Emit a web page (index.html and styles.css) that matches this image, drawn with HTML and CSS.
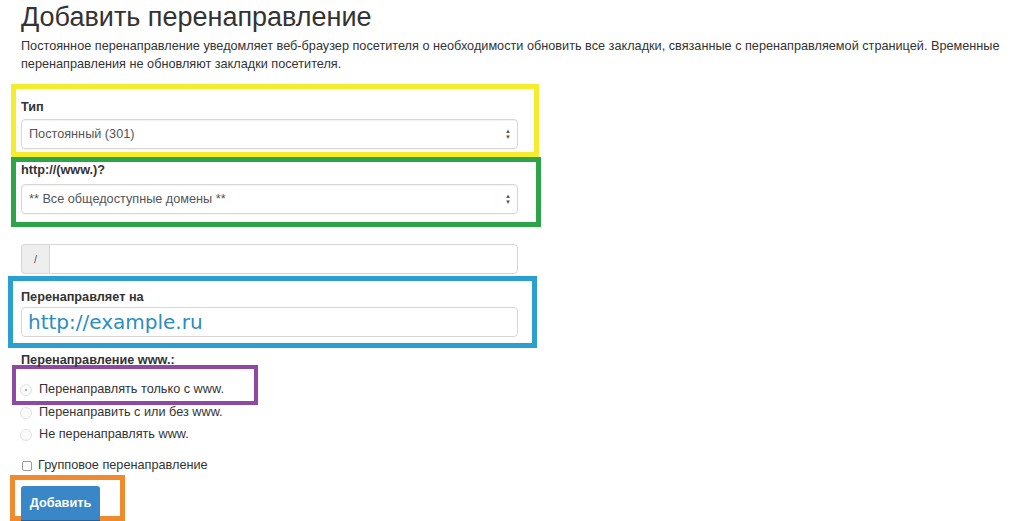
FILE: index.html
```html
<!DOCTYPE html>
<html lang="ru">
<head>
<meta charset="utf-8">
<link rel="stylesheet" href="styles.css">
</head>
<body>
<div class="page">
  <h1 class="title">Добавить перенаправление</h1>
  <p class="intro">Постоянное перенаправление уведомляет веб-браузер посетителя о необходимости обновить все закладки, связанные с перенаправляемой страницей. Временные перенаправления не обновляют закладки посетителя.</p>

  <div class="mark mark-yellow">
    <label class="lbl">Тип</label>
    <div class="select"><span>Постоянный (301)</span><span class="arrows">&#9650;<br>&#9660;</span></div>
  </div>

  <div class="mark mark-green">
    <label class="lbl">http://(www.)?</label>
    <div class="select"><span>** Все общедоступные домены **</span><span class="arrows">&#9650;<br>&#9660;</span></div>
  </div>

  <div class="input-group">
    <span class="addon">/</span>
    <span class="input-field"></span>
  </div>

  <div class="mark mark-blue">
    <label class="lbl">Перенаправляет на</label>
    <div class="text-input"><span class="big-url">http://example.ru</span></div>
  </div>

  <label class="lbl lbl-www">Перенаправление www.:</label>
  <div class="mark mark-purple">
    <div class="radio-row"><span class="radio checked"></span>Перенаправлять только с www.</div>
  </div>
  <div class="radio-row radio-second"><span class="radio"></span>Перенаправить с или без www.</div>
  <div class="radio-row radio-last"><span class="radio"></span>Не перенаправлять www.</div>

  <div class="check-row"><span class="checkbox"></span>Групповое перенаправление</div>

  <div class="mark mark-orange">
    <button class="btn">Добавить</button>
  </div>
</div>
</body>
</html>
```

FILE: styles.css
```css
html, body {
  margin: 0;
  padding: 0;
  background: #fff;
  overflow: hidden;
}
body {
  font-family: "Liberation Sans", Arial, sans-serif;
  color: #333;
  font-size: 12.7px;
}
.page {
  padding-left: 21px;
  width: 1000px;
}
.title {
  font-size: 27px;
  font-weight: normal;
  margin: 0;
  padding-top: 1px;
  line-height: 32px;
  color: #333;
}
.intro {
  margin: 4px 0 0 0;
  line-height: 18px;
  font-size: 12.7px;
  color: #333;
  width: 995px;
}
.mark {
  box-sizing: border-box;
  margin-left: -10px;
  padding-left: 5px;
  border: 5px solid transparent;
}
.mark-yellow {
  margin-top: 11px;
  width: 528px;
  border-color: #f4ec2c;
  padding-top: 10px;
  padding-bottom: 3px;
}
.mark-yellow .lbl {
  margin-bottom: 3px;
}
.mark-green {
  width: 530px;
  border-color: #2ea44a;
  padding-top: 0;
  padding-bottom: 8px;
}
.mark-blue {
  margin-left: -13px;
  padding-left: 8px;
  width: 529px;
  border-color: #2a9fd0;
  padding-top: 8px;
  padding-bottom: 6px;
  margin-top: 2px;
}
.mark-blue .lbl {
  margin-bottom: 1px;
}
.mark-purple {
  width: 246px;
  border-width: 4px;
  border-color: #8e4aa2;
  margin-left: -9px;
  padding-left: 5px;
  padding-top: 12px;
  padding-bottom: 3px;
  margin-top: -4px;
}
.mark-orange {
  width: 115px;
  border-width: 5px;
  border-color: #ef8a2e;
  margin-left: -11px;
  padding-left: 6px;
  padding-top: 6px;
  margin-top: 1px;
  height: 46px;
}
.lbl {
  display: block;
  font-weight: bold;
  font-size: 12.7px;
  line-height: 17px;
  margin-bottom: 5px;
  color: #333;
}
.select {
  box-sizing: border-box;
  width: 497px;
  height: 30px;
  border: 1px solid #d6d6d6;
  border-radius: 4px;
  box-shadow: inset 0 1px 1px rgba(0,0,0,0.05), 0 1px 1px rgba(0,0,0,0.04);
  display: flex;
  align-items: center;
  justify-content: space-between;
  padding: 0 6px 0 7px;
  color: #555;
  font-size: 12.7px;
}
.arrows {
  font-size: 6px;
  line-height: 6px;
  color: #555;
  text-align: center;
}
.input-group {
  display: flex;
  width: 497px;
  height: 30px;
  margin-top: 17px;
  box-sizing: border-box;
}
.addon {
  box-sizing: border-box;
  width: 28px;
  height: 30px;
  border: 1px solid #d6d6d6;
  border-right: 0;
  border-radius: 4px 0 0 4px;
  background: #eee;
  color: #555;
  display: flex;
  align-items: center;
  justify-content: center;
  font-size: 11px;
}
.input-field {
  flex: 1;
  box-sizing: border-box;
  height: 30px;
  border: 1px solid #d6d6d6;
  border-radius: 0 4px 4px 0;
}
.text-input {
  box-sizing: border-box;
  width: 497px;
  height: 30px;
  border: 1px solid #d6d6d6;
  border-radius: 4px;
  display: flex;
  align-items: center;
  padding-left: 6px;
}
.big-url {
  font-family: "DejaVu Sans", Verdana, sans-serif;
  font-size: 20px;
  color: #2a8dc2;
  line-height: 24px;
}
.lbl-www {
  margin-top: 4px;
  margin-bottom: 0;
}
.radio-row, .check-row {
  display: flex;
  align-items: center;
  font-size: 12.7px;
  line-height: 17px;
  height: 17px;
  color: #333;
}
.radio-second {
  margin-top: -1px;
}
.radio-last {
  margin-top: 5px;
}
.radio {
  box-sizing: border-box;
  width: 12px;
  height: 12px;
  border: 1px solid #e3e3e3;
  border-radius: 50%;
  margin-left: -1px;
  margin-right: 7px;
  background: #fafafa;
  position: relative;
}
.radio.checked::after {
  content: "";
  position: absolute;
  left: 4px;
  top: 4px;
  width: 2px;
  height: 2px;
  border-radius: 50%;
  background: #999;
}
.check-row {
  margin-top: 14px;
}
.checkbox {
  box-sizing: border-box;
  width: 10px;
  height: 10px;
  border: 1px solid #999;
  border-radius: 2px;
  margin-left: 1px;
  margin-right: 6px;
}
.btn {
  font-family: "Liberation Sans", Arial, sans-serif;
  font-size: 12.7px;
  font-weight: bold;
  color: #fff;
  background: #3a87c8;
  border: 0;
  border-bottom: 3px solid #2a5f8f;
  border-radius: 3px;
  width: 79px;
  height: 37px;
  padding: 0;
  text-align: center;
}
```
